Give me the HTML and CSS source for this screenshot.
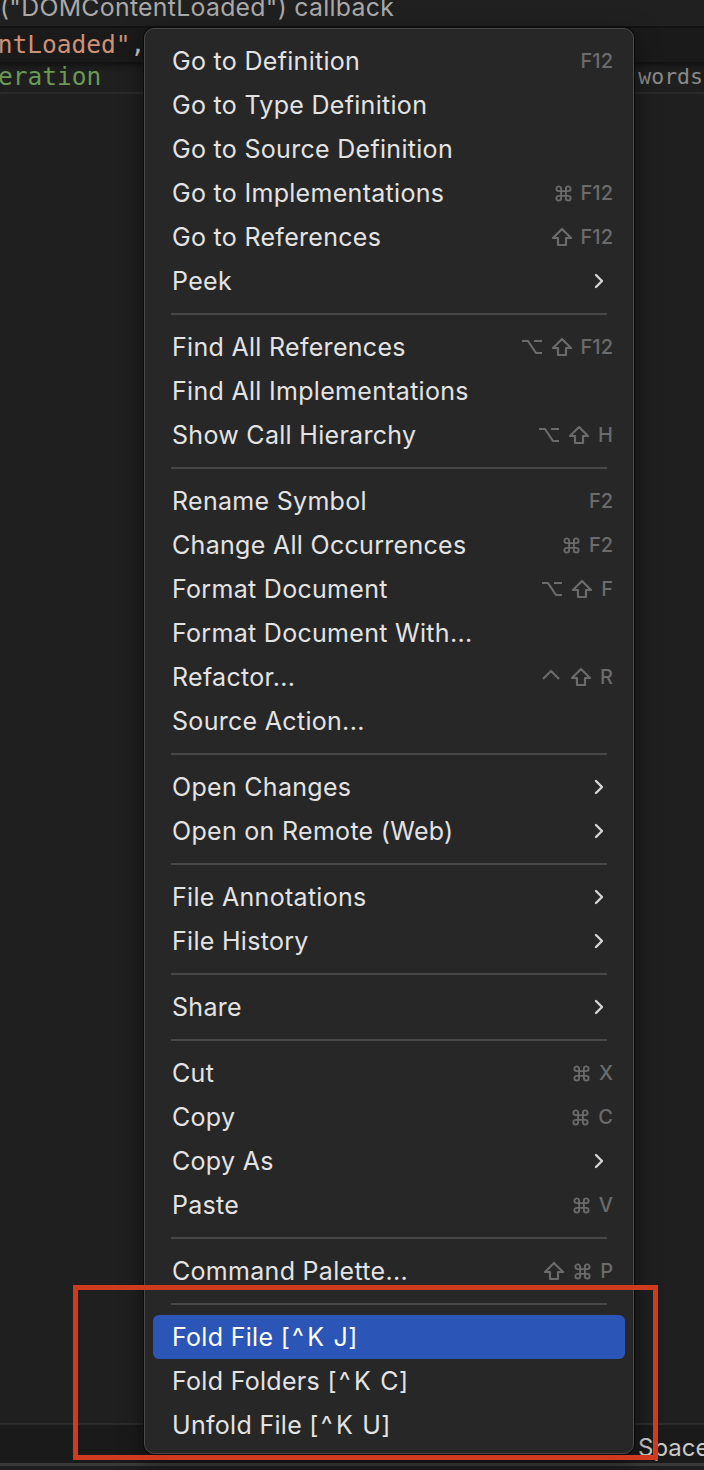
FILE: index.html
```html
<!DOCTYPE html>
<html>
<head>
<meta charset="utf-8">
<link rel="stylesheet" href="styles.css">
</head>
<body>
<svg width="0" height="0" class="defs">
  <defs>
    <symbol id="k-shift" viewBox="0 0 22 20"><path d="M11 2 L20 11 H15 V18 H7 V11 H2 Z"/></symbol>
    <symbol id="k-opt" viewBox="0 0 22 20"><path d="M1 4 H7 L15 16 H21 M13 4 H21"/></symbol>
    <symbol id="k-ctrl" viewBox="0 0 22 20"><path d="M3 12 L11 4 L19 12"/></symbol>
    <symbol id="k-cmd" viewBox="0 0 24 24"><path d="M15 6v12a3 3 0 1 0 3-3H6a3 3 0 1 0 3 3V6a3 3 0 1 0-3 3h12a3 3 0 1 0-3-3"/></symbol>
    <symbol id="chev" viewBox="0 0 10 16"><path d="M2 2 L8 8 L2 14"/></symbol>
  </defs>
</svg>
<div class="screen">
  <div class="editor">
    <div class="row row-lens"><span class="lens">("DOMContentLoaded") callback</span></div>
    <div class="row row-code"><span class="str">entLoaded"</span><span class="punc">,</span></div>
    <div class="row row-current"><span class="cmt">eration</span><span class="ghost">words</span></div>
    <div class="editor-fill"></div>
  </div>
  <div class="statusbar"><span class="status-text">Space</span></div>
  <div class="bottom-edge"></div>

  <div class="menu">
    <div class="item"><span class="label">Go to Definition</span><span class="keys">F12</span></div>
    <div class="item"><span class="label">Go to Type Definition</span></div>
    <div class="item"><span class="label">Go to Source Definition</span></div>
    <div class="item"><span class="label">Go to Implementations</span><span class="keys"><svg class="sym cmd"><use href="#k-cmd"/></svg>F12</span></div>
    <div class="item"><span class="label">Go to References</span><span class="keys"><svg class="sym"><use href="#k-shift"/></svg>F12</span></div>
    <div class="item"><span class="label">Peek</span><svg class="chev"><use href="#chev"/></svg></div>
    <div class="sep"></div>
    <div class="item"><span class="label">Find All References</span><span class="keys"><svg class="sym"><use href="#k-opt"/></svg><svg class="sym"><use href="#k-shift"/></svg>F12</span></div>
    <div class="item"><span class="label">Find All Implementations</span></div>
    <div class="item"><span class="label">Show Call Hierarchy</span><span class="keys"><svg class="sym"><use href="#k-opt"/></svg><svg class="sym"><use href="#k-shift"/></svg>H</span></div>
    <div class="sep"></div>
    <div class="item"><span class="label">Rename Symbol</span><span class="keys">F2</span></div>
    <div class="item"><span class="label">Change All Occurrences</span><span class="keys"><svg class="sym cmd"><use href="#k-cmd"/></svg>F2</span></div>
    <div class="item"><span class="label">Format Document</span><span class="keys"><svg class="sym"><use href="#k-opt"/></svg><svg class="sym"><use href="#k-shift"/></svg>F</span></div>
    <div class="item"><span class="label">Format Document With...</span></div>
    <div class="item"><span class="label">Refactor...</span><span class="keys"><svg class="sym"><use href="#k-ctrl"/></svg><svg class="sym"><use href="#k-shift"/></svg>R</span></div>
    <div class="item"><span class="label">Source Action...</span></div>
    <div class="sep"></div>
    <div class="item"><span class="label">Open Changes</span><svg class="chev"><use href="#chev"/></svg></div>
    <div class="item"><span class="label">Open on Remote (Web)</span><svg class="chev"><use href="#chev"/></svg></div>
    <div class="sep"></div>
    <div class="item"><span class="label">File Annotations</span><svg class="chev"><use href="#chev"/></svg></div>
    <div class="item"><span class="label">File History</span><svg class="chev"><use href="#chev"/></svg></div>
    <div class="sep"></div>
    <div class="item"><span class="label">Share</span><svg class="chev"><use href="#chev"/></svg></div>
    <div class="sep"></div>
    <div class="item"><span class="label">Cut</span><span class="keys"><svg class="sym cmd"><use href="#k-cmd"/></svg>X</span></div>
    <div class="item"><span class="label">Copy</span><span class="keys"><svg class="sym cmd"><use href="#k-cmd"/></svg>C</span></div>
    <div class="item"><span class="label">Copy As</span><svg class="chev"><use href="#chev"/></svg></div>
    <div class="item"><span class="label">Paste</span><span class="keys"><svg class="sym cmd"><use href="#k-cmd"/></svg>V</span></div>
    <div class="sep"></div>
    <div class="item"><span class="label">Command Palette...</span><span class="keys"><svg class="sym"><use href="#k-shift"/></svg><svg class="sym cmd"><use href="#k-cmd"/></svg>P</span></div>
    <div class="sep"></div>
    <div class="item active"><span class="label">Fold File <span class="chord">[<span class="caret">^</span>K J]</span></span></div>
    <div class="item"><span class="label">Fold Folders <span class="chord">[<span class="caret">^</span>K C]</span></span></div>
    <div class="item"><span class="label">Unfold File <span class="chord">[<span class="caret">^</span>K U]</span></span></div>
  </div>

  <div class="annotation"></div>
</div>
</body>
</html>
```

FILE: styles.css
```css
html, body {
  margin: 0;
  padding: 0;
  background: #000;
}

.defs {
  position: absolute;
  width: 0;
  height: 0;
}

.screen {
  position: relative;
  width: 704px;
  height: 1470px;
  overflow: hidden;
  background: #1e1e1e;
  font-family: Inter, "Noto Sans", sans-serif;
}

.editor {
  display: flex;
  flex-direction: column;
  height: 1423px;
}

.row {
  display: flex;
  align-items: flex-end;
  white-space: nowrap;
  overflow: hidden;
}

.row-lens {
  height: 26px;
  background: #202020;
  border-bottom: 2px solid #121212;
}

.lens {
  font-size: 24.8px;
  line-height: 24px;
  color: #a9a9a9;
  margin-bottom: 7px;
  letter-spacing: 0.3px;
}

.row-code {
  height: 34px;
  background: #1a1a1a;
  font-family: "DejaVu Sans Mono", monospace;
  font-size: 24.5px;
  line-height: 34px;
}

.row-code .str {
  margin-left: -17px;
}

.str { color: #ce9178; }
.punc { color: #cccccc; }

.row-current {
  height: 30px;
  background: #1f1f1f;
  border-bottom: 2px solid #2a2a2a;
  box-shadow: inset 0 6px 6px -4px #0c0c0c;
  font-family: "DejaVu Sans Mono", monospace;
  font-size: 24.5px;
  line-height: 30px;
  justify-content: space-between;
}

.cmt {
  color: #6a9955;
  margin-left: -2px;
}

.ghost {
  color: #8a8a8a;
  font-size: 21.5px;
  margin-right: 1px;
}

.editor-fill {
  flex: 1;
  background: #1f1f1f;
}

.statusbar {
  height: 38px;
  border-top: 2px solid #2b2b2b;
  background: #1a1a1a;
  display: flex;
  align-items: flex-end;
  padding-left: 638px;
  overflow: hidden;
  white-space: nowrap;
}

.status-text {
  font-size: 24px;
  color: #c8c8c8;
  line-height: 30px;
}

.bottom-edge {
  height: 3px;
  background: #3a3a3a;
}

/* context menu */
.menu {
  position: absolute;
  left: 144px;
  top: 28px;
  box-sizing: border-box;
  width: 490px;
  padding: 10px 8px 6px;
  background: #272727;
  border: 1px solid #4a4a4a;
  border-radius: 10px;
  box-shadow: 0 0 0 1px #0b0b0b, 0 8px 24px rgba(0,0,0,0.5);
}

.item {
  display: flex;
  align-items: center;
  justify-content: space-between;
  height: 44px;
  padding: 0 12px 0 19px;
  border-radius: 6px;
}

.label {
  font-size: 25px;
  color: #e3e3e3;
  letter-spacing: 0.3px;
  white-space: nowrap;
}

.chord {
  word-spacing: 2px;
}

.caret {
  display: inline-block;
  padding: 0 3px 0 2px;
}

.item.active {
  background: #2b55b6;
}

.item.active .label {
  color: #ffffff;
}

.keys {
  display: flex;
  align-items: center;
  gap: 8px;
  font-size: 20px;
  font-weight: 500;
  color: #6b6b6b;
}

.sym {
  width: 22px;
  height: 20px;
  fill: none;
  stroke: #6b6b6b;
  stroke-width: 2.2;
  stroke-linejoin: round;
}

.sym.cmd {
  width: 19px;
  height: 19px;
  stroke-width: 2.3;
}

.chev {
  width: 10px;
  height: 16px;
  margin-right: 9px;
  fill: none;
  stroke: #d6d6d6;
  stroke-width: 2.4;
  stroke-linecap: round;
  stroke-linejoin: round;
}

.sep {
  height: 2px;
  margin: 10px 18px;
  background: #474747;
}

.annotation {
  position: absolute;
  left: 73px;
  top: 1285px;
  width: 575px;
  height: 165px;
  border: 5px solid #d03a1f;
}
```
